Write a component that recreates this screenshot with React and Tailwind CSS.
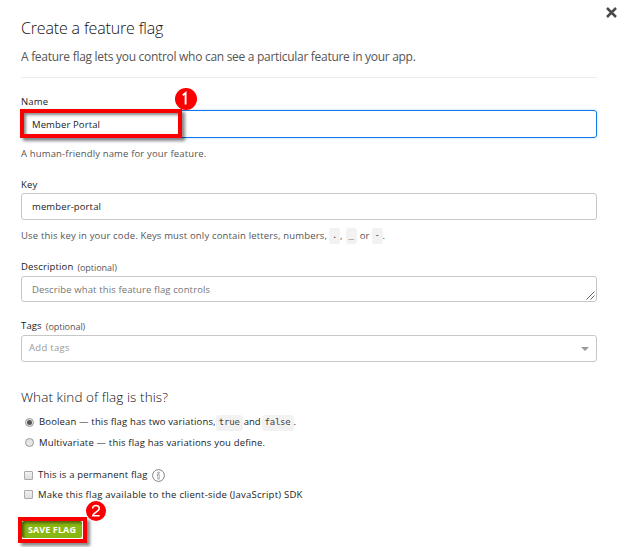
import React from "react";

function Code({ children, className }) {
  return (
    <code className={`inline-flex h-4 shrink-0 items-center justify-center rounded-[3px] bg-[#f2f2f2] font-['DejaVu_Sans_Mono',monospace] text-[9px] tracking-[-0.2px] text-[#444] ${className}`}>
      {children}
    </code>
  );
}

function Label({ children, optional }) {
  return (
    <label className="flex h-4 items-center gap-1 text-[9.5px] tracking-[0.15px] text-[#222]">
      {children}
      {optional && <span className="pt-px text-[9px] tracking-[-0.05px] text-[#555]">(optional)</span>}
    </label>
  );
}

function Radio({ checked }) {
  return (
    <span className="flex size-[9px] shrink-0 items-center justify-center rounded-full border border-[#999] bg-[#e6e6e6]">
      {checked && <span className="size-[5px] rounded-full bg-[#555]" />}
    </span>
  );
}

function Checkbox() {
  return <span className="size-[9px] shrink-0 rounded-[1px] border border-[#aaa] bg-gradient-to-b from-[#f2f2f2] to-[#dedede]" />;
}

function Badge({ n, className }) {
  return (
    <svg className={`absolute ${className}`} viewBox="0 0 22 22">
      <circle cx="11" cy="11" r="11" fill="#fa0000" />
      {n === 1 ? (
        <path d="M7.8 7.2 10.6 4.9V16.5" fill="none" stroke="#fff" strokeWidth="1.9" />
      ) : (
        <path d="M7.3 8.2C7.3 3.8 14.6 3.9 14.6 8.2C14.6 11 7.5 13.4 7.5 16.2H15" fill="none" stroke="#fff" strokeWidth="1.7" />
      )}
    </svg>
  );
}

export default function App() {
  return (
    <main className="relative h-[547px] w-[618px] overflow-hidden bg-white pl-[21px] pr-[21px] pt-[17px] font-['Open_Sans','Noto_Sans',sans-serif] whitespace-nowrap">
      <button aria-label="Close" className="absolute left-[606px] top-[7px] size-[11px]">
        <svg viewBox="0 0 11 11" className="size-[11px]">
          <path d="M1 1 10 10M10 1 1 10" stroke="#4a4a4a" strokeWidth="2.5" />
        </svg>
      </button>

      <header className="h-[61px] border-b border-[#ebebeb]">
        <h1 className="h-[22px] text-[16px] leading-[22px] font-light tracking-[-0.16px] text-[#111]">Create a feature flag</h1>
        <p className="mt-2 h-5 text-[12px] leading-5 tracking-[-0.29px] text-[#555]">A feature flag lets you control who can see a particular feature in your app.</p>
      </header>

      <section className="relative mt-4 h-[83px]">
        <Label>Name</Label>
        <div className="flex h-7 w-[576px] items-center rounded-[3px] border border-[#0f78e8] pt-0.5 pl-2.5 text-[9.5px] tracking-[0.12px] text-[#222] shadow-[0_0_3px_#b9dcff]">Member Portal</div>
        <p className="mt-2 h-4 text-[9.5px] leading-4 tracking-[0.15px] text-[#555]">A human-friendly name for your feature.</p>
        <div className="absolute -left-px top-[15px] h-[29px] w-[162px] border-4 border-[#fa0000] shadow-[3px_3px_3px_#0007,inset_2px_2px_3px_#0007]" />
        <Badge n={1} className="left-[154px] top-[-6px] size-[22px]" />
      </section>

      <section className="h-[82px]">
        <Label>Key</Label>
        <div className="flex h-[27px] w-[576px] items-center rounded-[3px] border border-[#c7c7c7] pt-0.5 pl-2.5 text-[9.5px] tracking-[0.12px] text-[#222]">member-portal</div>
        <p className="mt-2 flex h-4 items-center text-[9.5px] tracking-[0.16px] text-[#555]">
          Use this key in your code. Keys must only contain letters, numbers,
          <Code className="ml-[2px] w-[11px]">.</Code>,
          <Code className="ml-[3px] w-[11px]">_</Code>
          <span className="ml-[3px]">or</span>
          <Code className="ml-[2px] w-[11px]">-</Code>.
        </p>
      </section>

      <section className="h-[59px]">
        <Label optional>Description</Label>
        <div className="mt-px flex h-[26px] w-[576px] items-center rounded-[3px] border border-[#c7c7c7] pl-2.5 text-[9.5px] tracking-[0.12px] text-[#757575]">
          <span className="pt-0.5">Describe what this feature flag controls</span>
          <svg viewBox="0 0 9 9" className="mr-px mb-px ml-auto size-[9px] self-end">
            <path d="M.5 8.5 8.5.5M4.5 8.5 8.5 4.5" stroke="#555" strokeWidth=".9" />
          </svg>
        </div>
      </section>

      <section className="h-[69px]">
        <Label optional>Tags</Label>
        <div className="mt-px flex h-[27px] w-[576px] items-center justify-between rounded-[3px] border border-[#c7c7c7] pl-[7px] pr-[7px] text-[9.5px] tracking-[0.3px] text-[#999]">
          Add tags
          <svg viewBox="0 0 8 4" className="h-1 w-2"><path d="M0 0H8L4 4Z" fill="#999" /></svg>
        </div>
      </section>

      <section>
        <h2 className="h-5 text-[13.5px] leading-5 font-light tracking-[0.08px] text-[#111]">What kind of flag is this?</h2>
        <div className="mt-[5px] ml-1 flex h-5 items-center gap-[5px] text-[9.5px] tracking-[0.15px] text-[#222]">
          <Radio checked />
          <span className="flex items-center pt-px">
            Boolean — this flag has two variations,
            <Code className="w-[27px]">true</Code>
            <span className="ml-px tracking-[-0.05px]">and</span>
            <Code className="ml-px w-8">false</Code>.
          </span>
        </div>
        <div className="ml-1 flex h-5 items-center gap-[5px] text-[9.5px] tracking-[0.17px] text-[#222]">
          <Radio /><span className="pt-0.5">Multivariate — this flag has variations you define.</span>
        </div>
      </section>

      <section className="mt-[13px] ml-[3px] text-[9.5px] tracking-[0.17px] text-[#222]">
        <div className="flex h-5 items-center gap-[5px]">
          <Checkbox />
          <span className="pt-px">This is a permanent flag</span>
          <svg viewBox="0 0 13 13" className="-ml-px size-[13px]" fill="none" stroke="#666" strokeWidth=".8">
            <circle cx="6.5" cy="6.5" r="5.9" />
            <path d="M5.7 3.1h1.6v1.2h-1.6zM5 5.6h2.3v4.5h-1.6V6.5H5z" strokeWidth=".5" />
          </svg>
        </div>
        <div className="flex h-[19px] items-center gap-[5px]">
          <Checkbox /><span className="pt-px tracking-[0.24px]">Make this flag available to the client-side (JavaScript) SDK</span>
        </div>
      </section>

      <div className="relative -ml-[3px] mt-[13px] h-[26px] w-[69px] border-4 border-[#fa0000] bg-white shadow-[3px_3px_3px_#0007]">
        <button className="flex h-[17px] w-[60px] items-center justify-center rounded-[2px] bg-[#8ab711] pt-px text-[9px] font-bold tracking-[0.1px] text-white shadow-[inset_2px_2px_3px_#0007]">SAVE FLAG</button>
        <Badge n={2} className="left-[64px] top-[-20px] size-5" />
      </div>
    </main>
  );
}
